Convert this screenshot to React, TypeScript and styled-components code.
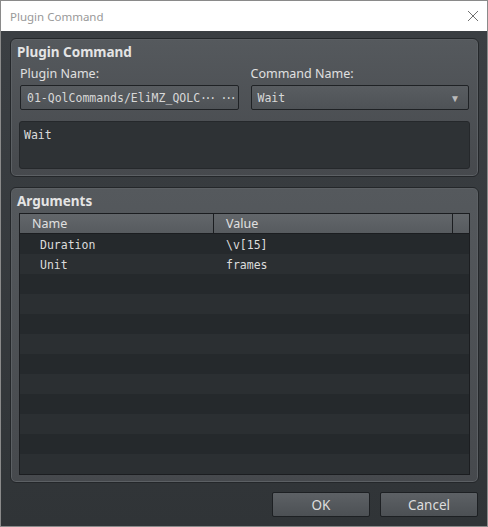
import styled, { createGlobalStyle } from "styled-components"

const GlobalStyle = createGlobalStyle`
  html, body { margin: 0; padding: 0; background: #ffffff; }
  * { box-sizing: border-box; }
`

const SANS = `"Noto Sans", "Open Sans", sans-serif`
const MONO = `"DejaVu Sans Mono", "Liberation Mono", monospace`

const args = [
  { name: "Duration", value: "\\v[15]" },
  { name: "Unit", value: "frames" },
]

const Window = styled.div`
  width: 488px;
  height: 527px;
  border: 1px solid #8a8a8a;
  display: flex;
  flex-direction: column;
  overflow: hidden;
`

const TitleBar = styled.div`
  height: 30px;
  flex: none;
  background: #ffffff;
  display: flex;
  align-items: center;
  justify-content: space-between;
  padding: 0 8px 0 9px;
  font-family: ${SANS};
  font-size: 11.5px;
  color: #999999;
`

const CloseIcon = () => (
  <svg width="12" height="12" viewBox="0 0 12 12">
    <path d="M1 1 L11 11 M11 1 L1 11" stroke="#707070" strokeWidth="1" />
  </svg>
)

const Body = styled.div`
  flex: 1;
  background: linear-gradient(#3b3f43, #303437);
  padding: 7px 8px 9px 9px;
  display: flex;
  flex-direction: column;
  font-family: ${SANS};
  color: #dddddd;
`

const Group = styled.div<{ $grow?: boolean }>`
  border: 1px solid #24272a;
  box-shadow: inset 0 0 0 1px #5c6064;
  border-radius: 6px;
  background: linear-gradient(#55595d, #46494d);
  padding: 5px 8px 7px 8px;
  display: flex;
  flex-direction: column;
  ${p => p.$grow && "flex: 1; margin-top: 10px;"}
`

const GroupTitle = styled.div`
  font-weight: bold;
  font-size: 13.5px;
  line-height: 16px;
  color: #e4e4e4;
  margin-left: -2px;
`

const FieldRow = styled.div`
  display: flex;
  gap: 12px;
  margin-top: 5px;
  padding: 0 1px 0 1px;
`

const Field = styled.div`
  flex: 1;
  min-width: 0;
  display: flex;
  flex-direction: column;
`

const Label = styled.div`
  font-size: 12.5px;
  line-height: 17px;
  color: #e0e0e0;
  margin-bottom: 3px;
`

const Box = styled.div`
  height: 25px;
  border: 1px solid #1f2225;
  border-radius: 2px;
  background: linear-gradient(#595d61, #4e5256);
  display: flex;
  align-items: center;
  justify-content: space-between;
  padding: 0 6px 0 6px;
  font-family: ${MONO};
  font-size: 11.5px;
  color: #d8d8d8;
  white-space: nowrap;
  overflow: hidden;
`

const Dots = styled.span`
  letter-spacing: -2.4px;
`

const Arrow = styled.span`
  font-family: ${SANS};
  font-size: 10px;
  color: #bbbbbb;
  margin-right: 2px;
`

const TextArea = styled.div`
  margin-top: 11px;
  height: 48px;
  border: 1px solid #25282b;
  border-radius: 3px;
  background: #2e3235;
  padding: 6px 4px;
  font-family: ${MONO};
  font-size: 11.5px;
  color: #dcdcdc;
`

const Table = styled.div`
  margin-top: 4px;
  flex: 1;
  border: 1px solid #1b1d20;
  display: flex;
  flex-direction: column;
  background: #2b2f32;
  overflow: hidden;
`

const Header = styled.div`
  height: 20px;
  flex: none;
  display: grid;
  grid-template-columns: 194px 1fr 16px;
  background: linear-gradient(#62666a, #575b5f);
  border-bottom: 1px solid #1b1d20;
`

const HeadCell = styled.div`
  font-size: 12.5px;
  line-height: 20px;
  padding-left: 12px;
  color: #e0e0e0;
  border-right: 1px solid #1b1d20;
  &:last-child { border-right: none; }
`

const Row = styled.div<{ $odd: boolean }>`
  height: 20px;
  flex: none;
  display: grid;
  grid-template-columns: 194px 1fr;
  background: ${p => (p.$odd ? "#2b2f32" : "#25292c")};
  font-family: ${MONO};
  font-size: 11.5px;
  line-height: 22px;
  color: #dcdcdc;
`

const NameCell = styled.div`
  padding-left: 20px;
`

const ValueCell = styled.div`
  padding-left: 12px;
`

const Buttons = styled.div`
  display: flex;
  justify-content: flex-end;
  gap: 10px;
  margin-top: 9px;
  padding-right: 1px;
`

const Button = styled.div`
  width: 98px;
  height: 25px;
  border: 1px solid #1d2023;
  border-radius: 2px;
  background: linear-gradient(#5d6165, #4c5054);
  display: flex;
  align-items: center;
  justify-content: center;
  font-size: 13.5px;
  color: #dddddd;
`

export default function App() {
  const rows = Array.from({ length: 12 }, (_, i) => args[i])
  return (
    <>
      <GlobalStyle />
      <Window>
        <TitleBar>
          <span>Plugin Command</span>
          <CloseIcon />
        </TitleBar>
        <Body>
          <Group>
            <GroupTitle>Plugin Command</GroupTitle>
            <FieldRow>
              <Field>
                <Label>Plugin Name:</Label>
                <Box>
                  <span>
                    01-QolCommands/EliMZ_QOLC<Dots>···</Dots> <Dots>···</Dots>
                  </span>
                </Box>
              </Field>
              <Field>
                <Label>Command Name:</Label>
                <Box>
                  Wait
                  <Arrow>▼</Arrow>
                </Box>
              </Field>
            </FieldRow>
            <TextArea>Wait</TextArea>
          </Group>
          <Group $grow>
            <GroupTitle>Arguments</GroupTitle>
            <Table>
              <Header>
                <HeadCell>Name</HeadCell>
                <HeadCell>Value</HeadCell>
                <HeadCell />
              </Header>
              {rows.map((r, i) => (
                <Row key={i} $odd={i % 2 === 1}>
                  <NameCell>{r?.name}</NameCell>
                  <ValueCell>{r?.value}</ValueCell>
                </Row>
              ))}
            </Table>
          </Group>
          <Buttons>
            <Button>OK</Button>
            <Button>Cancel</Button>
          </Buttons>
        </Body>
      </Window>
    </>
  )
}
